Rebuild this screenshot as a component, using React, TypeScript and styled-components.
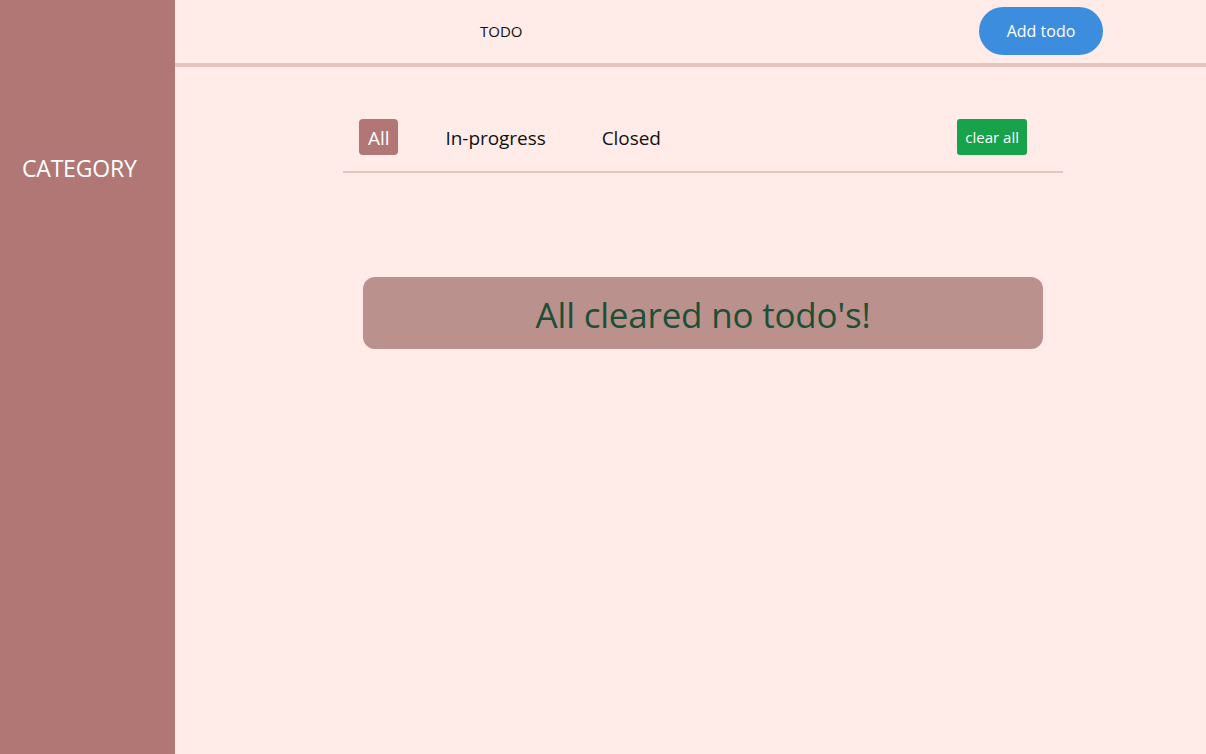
import React from "react";
import styled, { createGlobalStyle } from "styled-components";

const GlobalStyle = createGlobalStyle`
  * { box-sizing: border-box; }
  body {
    margin: 0;
    background: #ffece8;
    font-family: "Open Sans", "Noto Sans", sans-serif;
  }
`;

const Layout = styled.div`
  display: flex;
  min-height: 754px;
`;

const Sidebar = styled.aside`
  width: 175px;
  flex-shrink: 0;
  background: #b07775;
  padding: 152px 0 0 22px;
`;

const SideTitle = styled.div`
  color: #fff;
  font-size: 23px;
  letter-spacing: -0.2px;
`;

const Main = styled.main`
  flex: 1;
  display: flex;
  flex-direction: column;
`;

const Header = styled.header`
  height: 67px;
  border-bottom: 4px solid #e8c4bf;
  display: flex;
  align-items: center;
  padding: 0 103px 2px 305px;
`;

const Brand = styled.div`
  flex: 1;
  font-size: 15px;
  color: #111;
`;

const AddButton = styled.button`
  width: 124px;
  height: 48px;
  border: none;
  border-radius: 24px;
  background: #3d8ddf;
  color: #fff;
  font-family: inherit;
  font-size: 16px;
  cursor: pointer;
`;

const Content = styled.div`
  padding: 52px 0 0 168px;
  width: 888px;
`;

const Tabs = styled.nav`
  display: flex;
  align-items: center;
  padding: 0 36px 16px 16px;
  border-bottom: 2px solid #e8c4bf;
`;

const Tab = styled.button<{ $active?: boolean }>`
  height: 36px;
  padding: 1px 9px 0;
  margin-right: 38px;
  border: none;
  border-radius: 4px;
  background: ${({ $active }) => ($active ? "#b07775" : "transparent")};
  color: ${({ $active }) => ($active ? "#fff" : "#111")};
  font-family: inherit;
  font-size: 19px;
  letter-spacing: -0.05px;
  cursor: pointer;
`;

const ClearButton = styled.button`
  margin-left: auto;
  height: 36px;
  padding: 0 8px;
  border: none;
  border-radius: 3px;
  background: #18a34a;
  color: #fff;
  font-family: inherit;
  font-size: 15px;
  cursor: pointer;
`;

const Empty = styled.div`
  margin: 104px 20px 0;
  height: 72px;
  border-radius: 12px;
  background: #bb918d;
  color: #1c4f35;
  display: flex;
  align-items: center;
  justify-content: center;
  font-size: 35px;
  letter-spacing: -0.2px;
  padding-top: 2px;
`;

export default function App() {
  return (
    <>
      <GlobalStyle />
      <Layout>
        <Sidebar>
          <SideTitle>CATEGORY</SideTitle>
        </Sidebar>
        <Main>
          <Header>
            <Brand>TODO</Brand>
            <AddButton>Add todo</AddButton>
          </Header>
          <Content>
            <Tabs>
              <Tab $active>All</Tab>
              <Tab>In-progress</Tab>
              <Tab>Closed</Tab>
              <ClearButton>clear all</ClearButton>
            </Tabs>
            <Empty>All cleared no todo's!</Empty>
          </Content>
        </Main>
      </Layout>
    </>
  );
}
